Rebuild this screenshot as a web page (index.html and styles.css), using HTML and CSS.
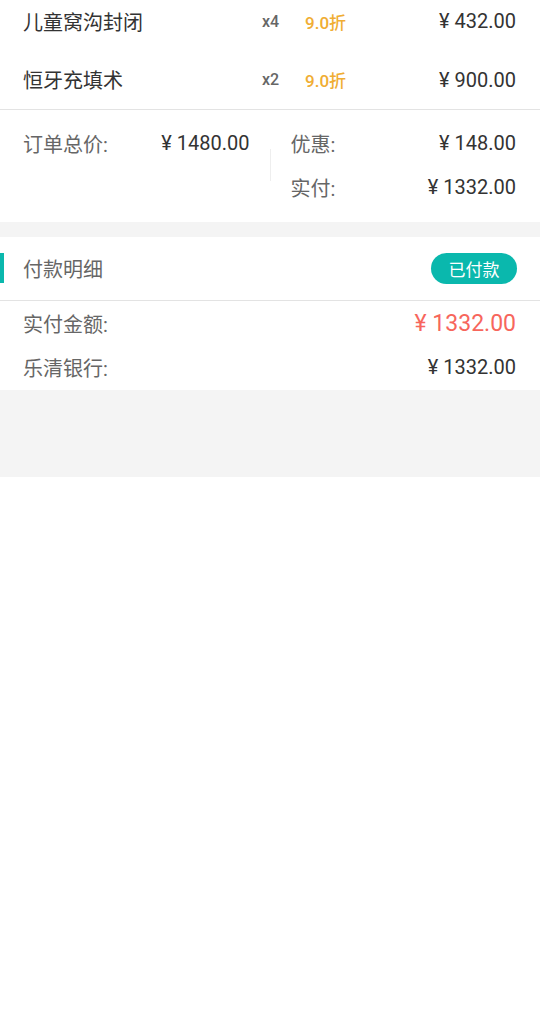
FILE: index.html
```html
<!DOCTYPE html>
<html lang="zh">
<head>
<meta charset="utf-8">
<title>订单详情</title>
<link rel="stylesheet" href="styles.css">
</head>
<body>
<div class="page">
  <section class="items">
    <div class="item">
      <span class="item-name">儿童窝沟封闭</span>
      <span class="item-qty">x4</span>
      <span class="item-discount">9.0折</span>
      <span class="item-price">¥ 432.00</span>
    </div>
    <div class="item">
      <span class="item-name">恒牙充填术</span>
      <span class="item-qty">x2</span>
      <span class="item-discount">9.0折</span>
      <span class="item-price">¥ 900.00</span>
    </div>
  </section>

  <section class="summary">
    <div class="summary-col">
      <div class="kv"><span class="label">订单总价:</span><span class="value">¥ 1480.00</span></div>
    </div>
    <div class="vline"></div>
    <div class="summary-col right">
      <div class="kv"><span class="label">优惠:</span><span class="value">¥ 148.00</span></div>
      <div class="kv"><span class="label">实付:</span><span class="value">¥ 1332.00</span></div>
    </div>
  </section>

  <div class="gap"></div>

  <section class="payment">
    <div class="pay-head">
      <span class="pay-title">付款明细</span>
      <span class="badge">已付款</span>
    </div>
    <div class="pay-row">
      <span class="label">实付金额:</span>
      <span class="value red">¥ 1332.00</span>
    </div>
    <div class="pay-row">
      <span class="label">乐清银行:</span>
      <span class="value">¥ 1332.00</span>
    </div>
  </section>

  <div class="footer-band"></div>
</div>
</body>
</html>
```

FILE: styles.css
```css
* { box-sizing: border-box; }
html, body { margin: 0; padding: 0; background: #fff; }
body {
  font-family: "Roboto", "Noto Sans CJK SC", sans-serif;
  color: #333;
  width: 540px;
  overflow: hidden;
}
.page { width: 540px; }

.items {
  margin-top: -8px;
  border-bottom: 1px solid #e3e3e3;
}
.item {
  display: grid;
  grid-template-columns: 239px 43px 1fr auto;
  align-items: center;
  height: 58px;
  padding: 0 24px 0 23px;
}
.item:last-child { height: 59px; }
.item-name { font-size: 20px; color: #333; }
.item-qty { font-size: 16px; color: #666; font-weight: 500; }
.item-discount { font-size: 17px; color: #f0ad33; font-weight: 500; }
.item-price { font-size: 20px; color: #333; text-align: right; }

.summary {
  display: grid;
  grid-template-columns: 1fr 1px 1fr;
  padding: 11px 0 13px;
}
.summary-col { padding: 0 20px 0 23px; }
.summary-col.right { padding: 0 24px 0 20px; }
.kv {
  display: flex;
  justify-content: space-between;
  align-items: center;
  height: 44px;
}
.label { font-size: 20px; color: #666; }
.value { font-size: 20px; color: #333; }
.vline {
  align-self: center;
  height: 32px;
  background: #eeeeee;
}

.gap { height: 15px; background: #f4f4f4; }

.pay-head {
  display: flex;
  justify-content: space-between;
  align-items: center;
  height: 64px;
  padding: 0 23px 0 23px;
  border-bottom: 1px solid #e3e3e3;
  position: relative;
}
.pay-head::before {
  content: "";
  position: absolute;
  left: 0;
  top: 16px;
  width: 4px;
  height: 30px;
  background: #0ab8ad;
}
.pay-title { font-size: 20px; color: #666; }
.badge {
  display: inline-flex;
  align-items: center;
  justify-content: center;
  width: 86px;
  height: 31px;
  border-radius: 16px;
  background: #0ab8ad;
  color: #fff;
  font-size: 17px;
}
.pay-row {
  display: flex;
  justify-content: space-between;
  align-items: center;
  height: 44px;
  padding: 0 24px 0 23px;
}
.value.red { color: #f7665c; font-size: 23px; }

.footer-band { height: 87px; background: #f4f4f4; margin-top: 1px; }
```
